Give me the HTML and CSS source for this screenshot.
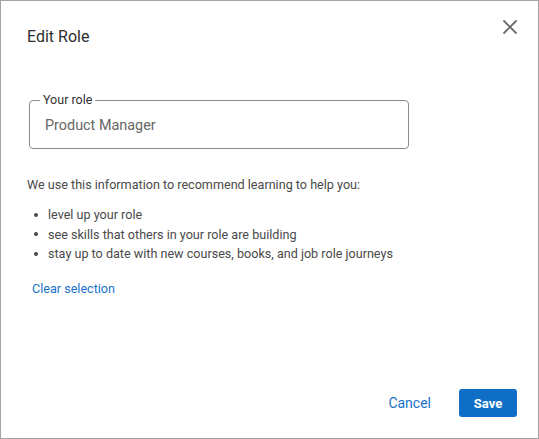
FILE: index.html
```html
<!DOCTYPE html>
<html>
<head>
<meta charset="utf-8">
<link rel="stylesheet" href="styles.css">
</head>
<body>
<div class="dialog">
  <div class="header">
    <h1 class="title">Edit Role</h1>
    <button class="close" aria-label="Close">
      <svg width="16" height="16" viewBox="0 0 16 16"><path d="M1.5 1.5L14.5 14.5M14.5 1.5L1.5 14.5" stroke="#6b6b6b" stroke-width="1.8" fill="none"/></svg>
    </button>
  </div>
  <div class="field">
    <span class="label">Your role</span>
    <div class="value">Product Manager</div>
  </div>
  <p class="intro">We use this information to recommend learning to help you:</p>
  <ul class="list">
    <li><span class="dot"></span><span>level up your role</span></li>
    <li><span class="dot"></span><span>see skills that others in your role are building</span></li>
    <li><span class="dot"></span><span>stay up to date with new courses, books, and job role journeys</span></li>
  </ul>
  <a class="clear" href="#">Clear selection</a>
  <div class="spacer"></div>
  <div class="footer">
    <a class="cancel" href="#">Cancel</a>
    <button class="save">Save</button>
  </div>
</div>
</body>
</html>
```
FILE: styles.css
```css
html, body {
  margin: 0;
  padding: 0;
  background: #fff;
}
body {
  font-family: Roboto, "Liberation Sans", sans-serif;
  color: #333;
}
.dialog {
  box-sizing: border-box;
  width: 539px;
  height: 439px;
  border: 1px solid #a3a3a3;
  display: flex;
  flex-direction: column;
  padding: 0 21px 0 26px;
}
.header {
  display: flex;
  justify-content: space-between;
  align-items: flex-start;
  height: 99px;
  flex: none;
}
.title {
  margin: 26px 0 0 0;
  font-size: 16px;
  font-weight: 400;
  color: #2e2e2e;
  line-height: 20px;
}
.close {
  margin: 18px -1px 0 0;
  padding: 0;
  border: 0;
  background: none;
  width: 16px;
  height: 16px;
  cursor: pointer;
}
.close svg { display: block; }
.field {
  position: relative;
  margin: 0 0 0 2px;
  padding: 0 15px;
  width: 380px;
  height: 49px;
  box-sizing: border-box;
  border: 1px solid #8c8c8c;
  border-radius: 4px;
  flex: none;
  display: flex;
  align-items: center;
}
.label {
  position: absolute;
  left: 10px;
  top: -8px;
  padding: 0 3px;
  background: #fff;
  font-size: 12.5px;
  color: #333;
  line-height: 14px;
}
.value {
  font-size: 14.4px;
  color: #666;
  line-height: 18px;
  margin-top: 2px;
}
.intro {
  margin: 28px 0 0 0;
  font-size: 12.6px;
  color: #4a4a4a;
  line-height: 16px;
}
.list {
  list-style: none;
  margin: 12px 0 0 0;
  padding: 0;
  font-size: 12.6px;
  color: #4a4a4a;
  line-height: 19.5px;
}
.list li {
  display: flex;
  align-items: center;
}
.dot {
  width: 4px;
  height: 4px;
  border-radius: 50%;
  background: #4a4a4a;
  margin: 0 10px 0 7px;
  flex: none;
}
.clear {
  margin: 17px 0 0 5px;
  font-size: 12.6px;
  color: #1a73c8;
  text-decoration: none;
  line-height: 16px;
  align-self: flex-start;
}
.spacer { flex: 1; }
.footer {
  display: flex;
  justify-content: flex-end;
  align-items: center;
  gap: 28px;
  margin-bottom: 21px;
}
.cancel {
  font-size: 14px;
  color: #1a73c8;
  text-decoration: none;
}
.save {
  width: 58px;
  height: 28px;
  border: 0;
  border-radius: 3px;
  background: #0f6fc6;
  color: #fff;
  font-family: Roboto, "Liberation Sans", sans-serif;
  font-size: 13px;
  font-weight: 700;
  cursor: pointer;
}
```
